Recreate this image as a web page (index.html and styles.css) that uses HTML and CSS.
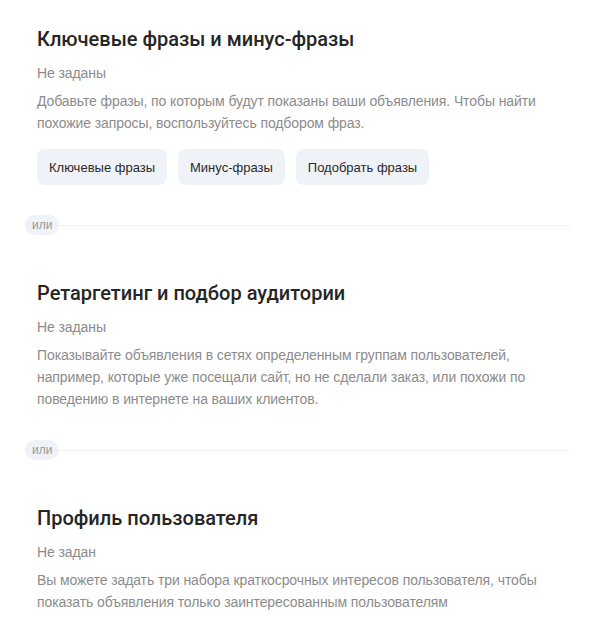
FILE: index.html
```html
<!DOCTYPE html>
<html lang="ru">
<head>
<meta charset="utf-8">
<link rel="stylesheet" href="styles.css">
</head>
<body>
<div class="page">
  <section class="block">
    <h2 class="title">Ключевые фразы и минус-фразы</h2>
    <div class="status">Не заданы</div>
    <p class="desc">Добавьте фразы, по которым будут показаны ваши объявления. Чтобы найти похожие запросы, воспользуйтесь подбором фраз.</p>
    <div class="buttons">
      <button class="btn">Ключевые фразы</button>
      <button class="btn">Минус-фразы</button>
      <button class="btn">Подобрать фразы</button>
    </div>
  </section>
  <div class="divider"><span class="or">или</span><span class="line"></span></div>
  <section class="block">
    <h2 class="title">Ретаргетинг и подбор аудитории</h2>
    <div class="status">Не заданы</div>
    <p class="desc">Показывайте объявления в сетях определенным группам пользователей, например, которые уже посещали сайт, но не сделали заказ, или похожи по поведению в интернете на ваших клиентов.</p>
  </section>
  <div class="divider"><span class="or">или</span><span class="line"></span></div>
  <section class="block">
    <h2 class="title">Профиль пользователя</h2>
    <div class="status">Не задан</div>
    <p class="desc">Вы можете задать три набора краткосрочных интересов пользователя, чтобы показать объявления только заинтересованным пользователям</p>
  </section>
</div>
</body>
</html>
```
FILE: styles.css
```css
* { box-sizing: border-box; }
body {
  margin: 0;
  background: #fff;
  font-family: "Liberation Sans", Arial, sans-serif;
  color: #222;
}
.page {
  padding: 25px 21px 0 25px;
}
.block {
  padding-left: 12px;
  display: flex;
  flex-direction: column;
}
.title {
  margin: 0;
  font-family: Roboto, "Liberation Sans", sans-serif;
  font-size: 20px;
  line-height: 28px;
  font-weight: 500;
  color: #262626;
}
.status {
  margin-top: 10px;
  font-size: 14px;
  line-height: 20px;
  color: #8c8c8c;
  letter-spacing: -0.1px;
}
.desc {
  margin: 7px 0 0;
  font-size: 14px;
  line-height: 22px;
  color: #8c8c8c;
  letter-spacing: -0.1px;
  max-width: 520px;
}
.buttons {
  display: flex;
  gap: 11px;
  margin-top: 15px;
}
.btn {
  border: 0;
  background: #eff2f6;
  border-radius: 8px;
  height: 36px;
  padding: 0 12px;
  font-family: inherit;
  font-size: 13px;
  color: #2a2a2a;
}
.divider {
  display: flex;
  align-items: center;
  margin: 30px 0 44px;
}
.or {
  background: #eff2f6;
  border-radius: 10px;
  height: 20px;
  line-height: 20px;
  padding: 0 7px;
  font-size: 12px;
  color: #999;
}
.line {
  flex: 1;
  height: 1px;
  background: #f0f1f3;
}
```
